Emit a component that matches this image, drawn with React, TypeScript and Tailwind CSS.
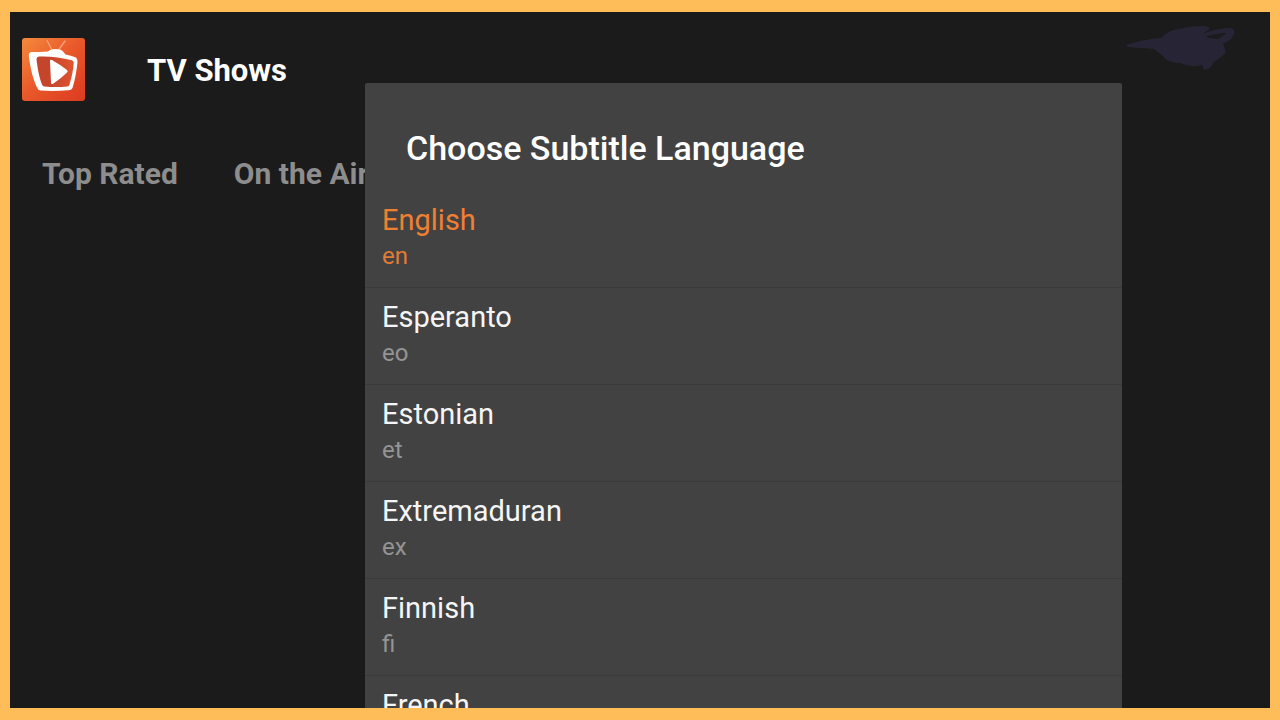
const TABS = ['Top Rated', 'On the Air']

const LANGUAGES = [
  { code: 'en', name: 'English' },
  { code: 'eo', name: 'Esperanto' },
  { code: 'et', name: 'Estonian' },
  { code: 'ex', name: 'Extremaduran' },
  { code: 'fi', name: 'Finnish' },
  { code: 'fr', name: 'French' },
]

const SELECTED = 'en'

export default function App() {
  return (
    <div className="h-screen bg-[#ffbd59] px-[10px] py-[12px] font-['Roboto',sans-serif]">
      <div className="relative h-full overflow-hidden bg-[#1b1b1b]">
        <header className="flex items-end pt-[13px] pl-3">
          <Logo />
          <h1 className="mb-3 ml-[62px] text-[31px] leading-9 font-bold text-white">TV Shows</h1>
          <Scribble />
        </header>

        <nav className="mt-[55px] flex gap-14 pl-8">
          {TABS.map((tab) => (
            <button key={tab} type="button" className="text-[30px] leading-9 font-bold whitespace-nowrap text-[#8d8d8d]">
              {tab}
            </button>
          ))}
        </nav>

        {/* Dialog layer */}
        <div className="absolute inset-0 pt-[71px] pr-[148px] pl-[355px]">
          <LanguageDialog />
        </div>
      </div>
    </div>
  )
}

function LanguageDialog() {
  return (
    <div role="dialog" aria-labelledby="dialog-title" className="rounded-t-xs bg-[#424242]">
      <h2 id="dialog-title" className="px-[41px] pt-[45px] pb-[23px] text-[34px] leading-10 font-medium text-white">
        Choose Subtitle Language
      </h2>
      <ul>
        {LANGUAGES.map(({ code, name }) => (
          <li key={code} className="border-b border-[#3a3a3a]">
            <button type="button" className="block w-full px-[17px] pt-[11px] pb-[17px] text-left">
              <span className={`block text-[29px] leading-9 ${code === SELECTED ? 'text-[#f08030]' : 'text-[#f5f5f5]'}`}>
                {name}
              </span>
              <span className={`mt-1 block text-[24px] leading-7 ${code === SELECTED ? 'text-[#e07c36]' : 'text-[#949494]'}`}>
                {code}
              </span>
            </button>
          </li>
        ))}
      </ul>
    </div>
  )
}

function Logo() {
  return (
    <svg viewBox="0 0 63 63" className="mt-[13px] size-[63px] shrink-0" aria-hidden="true">
      <defs>
        <linearGradient id="logo-bg" x1="0" y1="0" x2="1" y2="1">
          <stop offset="0" stopColor="#f58a3c" />
          <stop offset="0.5" stopColor="#e8572a" />
          <stop offset="1" stopColor="#dc3a20" />
        </linearGradient>
        <linearGradient id="logo-screen" x1="0" y1="0" x2="1" y2="0">
          <stop offset="0.3" stopColor="#c4442c" />
          <stop offset="1" stopColor="#df5530" />
        </linearGradient>
      </defs>
      <rect width="63" height="63" rx="3" fill="url(#logo-bg)" />
      <path d="M25 2.5 30 12M43 3 36.5 12" stroke="#f7a07c" strokeWidth="1.3" strokeLinecap="round" />
      {/* TV body */}
      <path
        fill="#fff"
        d="M9 14Q17 14 26 13.5Q28 11 33.5 11Q39.500 11 41.500 14L43.500 16.500Q49 17.500 54 19.500Q55.500 20.500 55.500 24Q54 39 50.500 50Q49.500 52.200 46.500 52.300Q31 53.500 18.500 52.500Q16 52.200 15 49.500C11 41 8.500 31 6.800 18Q6.500 14.500 9 14Z"
      />
      <path
        fill="url(#logo-screen)"
        d="M17 18.500Q14.500 18.700 14.500 21C15.500 31 17.500 40 20 46.500Q20.700 48.500 22.500 48.500Q34 49.500 45.500 48.500Q47 48.300 47.500 46.500C50 38 51.500 31 51.700 25Q51.700 23 50 22.300C39 19.500 28 18 17 18.500Z"
      />
      <path d="M28 23Q28 21 30 22Q38 26.500 45 32Q46.500 33.200 45 34.500Q39 40.500 31.500 45.500Q29 47 29 44.500Z" fill="#fff" />
    </svg>
  )
}

function Scribble() {
  return (
    <svg viewBox="0 0 110 46" className="mr-[34px] ml-auto h-[46px] w-[110px] shrink-0 self-start" aria-hidden="true">
      <path
        fill="#272535"
        d="M0 20Q18 14 35 13Q43 5 52 4Q66 1 78 1Q87 2 81 6L76 9Q91 3 104 3Q110 4 108 9L104 15 97 19 100 27 95 32 88 37 84 43 78 45 76 40Q65 43 54 38Q41 38 37 31L28 24 2 22ZM80 11.500 82 13 92 14 101 8Q91 8 80 11.500Z"
      />
    </svg>
  )
}
